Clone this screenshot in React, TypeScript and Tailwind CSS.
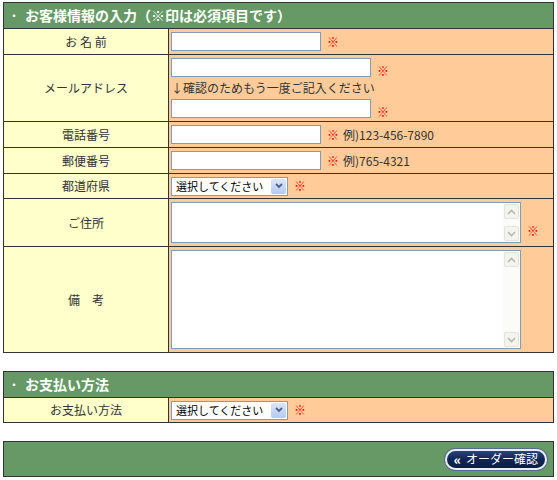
import React from 'react';

const font = { fontFamily: '"Noto Sans CJK JP", "Noto Sans", sans-serif' };

function Req() {
  return <span className="ml-[6px] text-[12px] font-black leading-none text-[#ff0000]">※</span>;
}

function TextBox({ w }: { w: string }) {
  return (
    <input
      type="text"
      className={`${w} h-[19px] border border-[#7f9db9] bg-white px-1 text-[12px] outline-none`}
    />
  );
}

function Arrow({ up }: { up?: boolean }) {
  return (
    <svg width="9" height="6" viewBox="0 0 9 6">
      <path
        d={up ? 'M1 5 L4.5 1.5 L8 5' : 'M1 1 L4.5 4.5 L8 1'}
        fill="none"
        stroke="#b9b9b0"
        strokeWidth="1.6"
      />
    </svg>
  );
}

function Memo({ h }: { h: string }) {
  return (
    <div className={`relative w-[350px] ${h} border border-[#7f9db9] bg-white`}>
      <textarea className="h-full w-full resize-none overflow-hidden bg-transparent pr-[18px] text-[12px] outline-none" />
      <div className="absolute top-0 right-0 bottom-0 flex w-[17px] flex-col justify-between bg-[#fbfbf8] p-[1px]">
        <div className="flex h-[15px] items-center justify-center rounded-[2px] border border-[#e4e4dc] bg-[#f4f4ef]">
          <Arrow up />
        </div>
        <div className="flex h-[15px] items-center justify-center rounded-[2px] border border-[#e4e4dc] bg-[#f4f4ef]">
          <Arrow />
        </div>
      </div>
    </div>
  );
}

function Select() {
  return (
    <div className="relative flex h-[19px] w-[117px] items-center border border-[#7f9db9] bg-white">
      <span className="pl-[4px] text-[11px] leading-none text-black">選択してください</span>
      <div className="absolute top-[1px] right-[1px] bottom-[1px] flex w-[15px] items-center justify-center rounded-[2px] bg-gradient-to-b from-[#dbe6fb] to-[#b5c9f2]">
        <svg width="8" height="6" viewBox="0 0 8 6">
          <path d="M1 1 L4 4 L7 1" fill="none" stroke="#4d6185" strokeWidth="1.8" />
        </svg>
      </div>
    </div>
  );
}

function Row({ label, h, children, center = true }: { label: string; h: string; children: React.ReactNode; center?: boolean }) {
  return (
    <div className={`flex ${h} border-b border-[#333333]`}>
      <div className="flex w-[165px] shrink-0 items-center justify-center border-r border-[#333333] bg-[#ffffcc] text-[12px] text-[#333333]">
        {label}
      </div>
      <div className={`flex flex-1 bg-[#ffcc99] pl-[2px] ${center ? 'items-center' : 'items-start pt-[3px]'}`}>
        {children}
      </div>
    </div>
  );
}

function Head({ title }: { title: string }) {
  return (
    <div className="flex h-[26px] items-center border-b border-[#333333] bg-[#669966] pl-[5px] text-[14px] font-bold text-white">
      <span className="mr-[6px] text-[10px]">・</span>
      {title}
    </div>
  );
}

export default function App() {
  return (
    <div className="min-h-[480px] bg-white pt-[2px] pl-[3px]" style={font}>
      <div className="w-[551px] border-t border-r border-l border-[#333333]">
        <Head title="お客様情報の入力（※印は必須項目です）" />
        <Row label="お 名 前" h="h-[26px]">
          <TextBox w="w-[150px]" />
          <Req />
        </Row>
        <Row label="メールアドレス" h="h-[67px]" center={false}>
          <div className="flex flex-col">
            <div className="flex items-end">
              <TextBox w="w-[200px]" />
              <Req />
            </div>
            <div className="h-[22px] pt-[2px] text-[12px] leading-[18px] text-[#333333]">↓確認のためもう一度ご記入ください</div>
            <div className="flex items-end">
              <TextBox w="w-[200px]" />
              <Req />
            </div>
          </div>
        </Row>
        <Row label="電話番号" h="h-[26px]">
          <TextBox w="w-[150px]" />
          <Req />
          <span className="ml-[4px] text-[12px] text-[#333333]">例)123-456-7890</span>
        </Row>
        <Row label="郵便番号" h="h-[26px]">
          <TextBox w="w-[150px]" />
          <Req />
          <span className="ml-[4px] text-[12px] text-[#333333]">例)765-4321</span>
        </Row>
        <Row label="都道府県" h="h-[25px]">
          <Select />
          <Req />
        </Row>
        <Row label="ご住所" h="h-[48px]" center={false}>
          <div className="flex items-end">
            <Memo h="h-[41px]" />
            <span className="mb-[2px]">
              <Req />
            </span>
          </div>
        </Row>
        <Row label="備　考" h="h-[106px]" center={false}>
          <Memo h="h-[99px]" />
        </Row>
      </div>

      <div className="mt-[18px] w-[551px] border-t border-r border-l border-[#333333]">
        <Head title="お支払い方法" />
        <Row label="お支払い方法" h="h-[25px]">
          <Select />
          <Req />
        </Row>
      </div>

      <div className="mt-[18px] flex h-[36px] w-[551px] items-center justify-end border border-[#333333] bg-[#669966] pr-[6px]">
        <button className="flex h-[21px] w-[102px] items-center justify-center gap-[5px] rounded-full border-2 border-[#e8ecf4] bg-gradient-to-b from-[#2a4478] via-[#0f2554] to-[#0b1c44] text-[12px] text-white shadow-[0_0_0_1px_#566a8f]">
          <span className="text-[13px] font-black leading-none">«</span>
          <span className="leading-none">オーダー確認</span>
        </button>
      </div>
    </div>
  );
}
